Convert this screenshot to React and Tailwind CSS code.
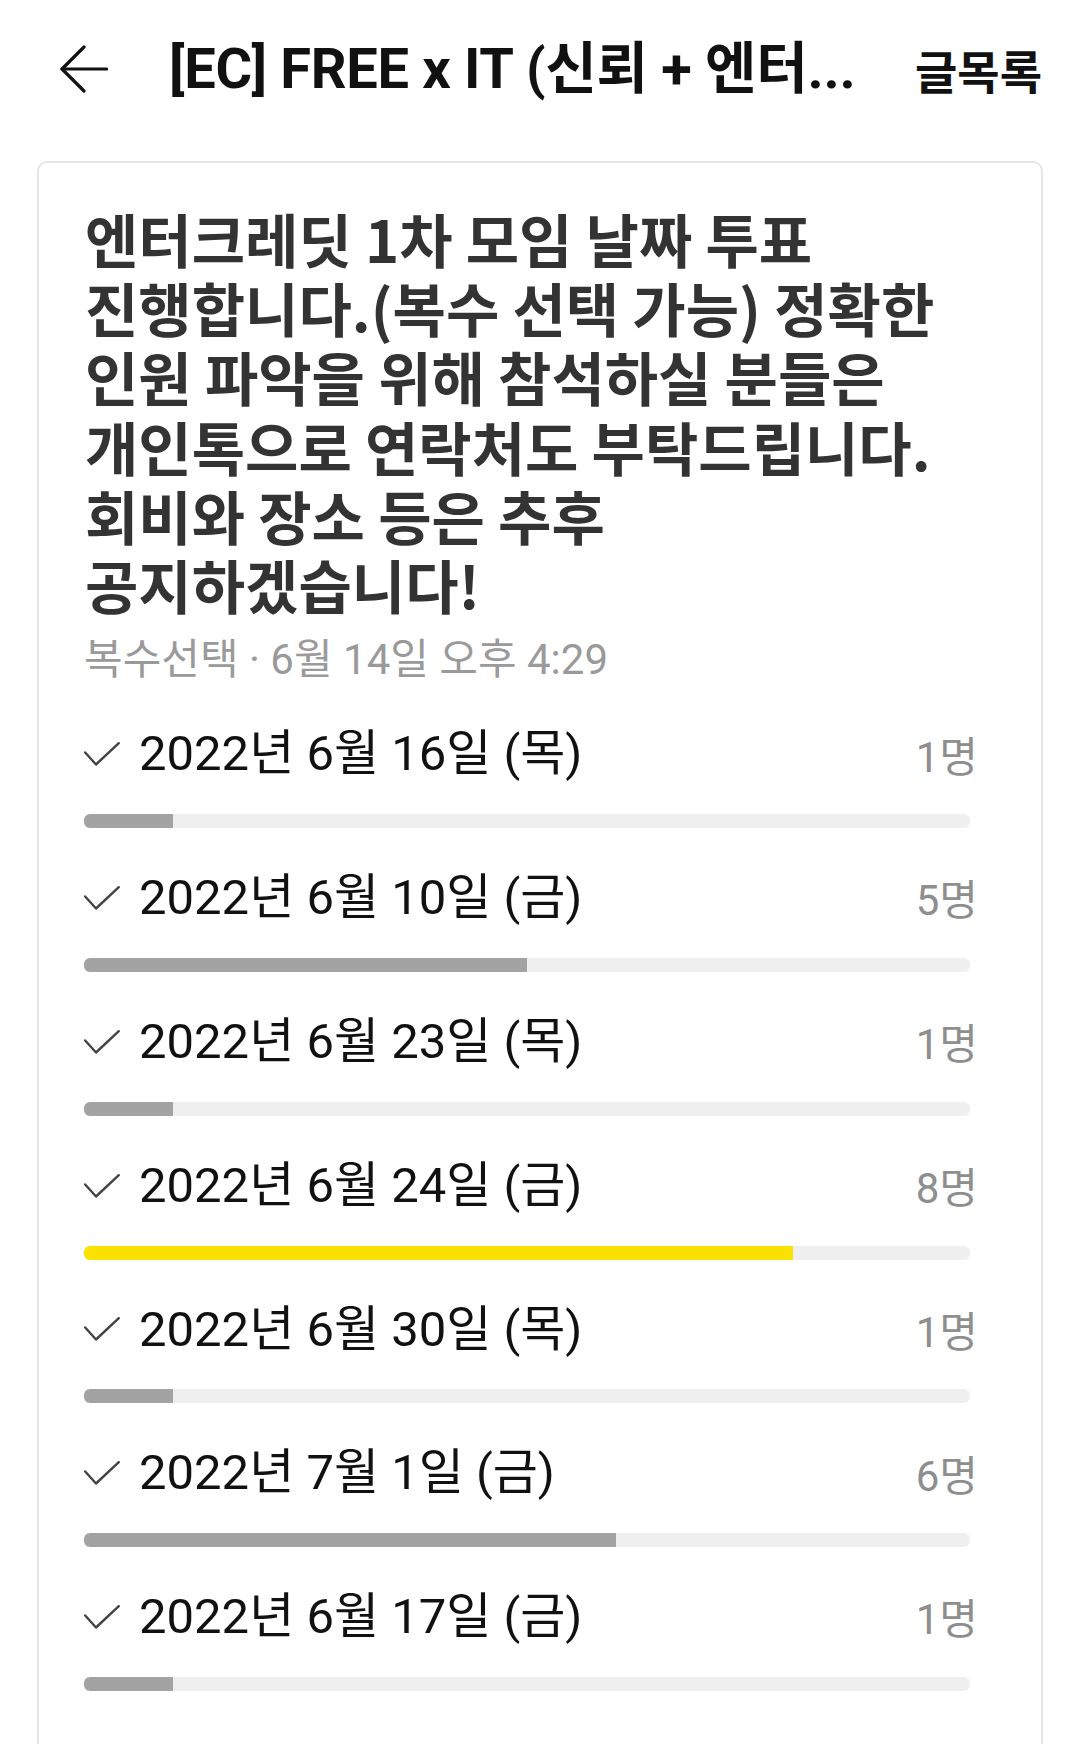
import React from "react";

const options = [
  { label: "2022년 6월 16일 (목)", count: 1 },
  { label: "2022년 6월 10일 (금)", count: 5 },
  { label: "2022년 6월 23일 (목)", count: 1 },
  { label: "2022년 6월 24일 (금)", count: 8, top: true },
  { label: "2022년 6월 30일 (목)", count: 1 },
  { label: "2022년 7월 1일 (금)", count: 6 },
  { label: "2022년 6월 17일 (금)", count: 1 },
];

const questionLines = [
  "엔터크레딧 1차 모임 날짜 투표",
  "진행합니다.(복수 선택 가능) 정확한",
  "인원 파악을 위해 참석하실 분들은",
  "개인톡으로 연락처도 부탁드립니다.",
  "회비와 장소 등은 추후",
  "공지하겠습니다!",
];

function BackArrow() {
  return (
    <svg width="48" height="48" viewBox="0 0 48 48" fill="none" stroke="#111" strokeWidth="3.2" strokeLinecap="round" strokeLinejoin="round">
      <path d="M2 24 H46.5" />
      <path d="M24 2 L2 24 L24 46" />
    </svg>
  );
}

function Check() {
  return (
    <svg width="36" height="24" viewBox="0 0 36 24" fill="none" stroke="#444" strokeWidth="2.4" strokeLinecap="round" strokeLinejoin="round">
      <polyline points="1.2,10.5 12,22.5 34.8,1.2" />
    </svg>
  );
}

export default function App() {
  return (
    <div className="w-[1080px] h-[1744px] overflow-hidden bg-white font-['Roboto','Noto_Sans_CJK_KR',sans-serif]">
      <header className="h-[138px] flex items-center pl-[60px] pr-[38px]">
        <BackArrow />
        <div className="ml-[61px] flex-1 min-w-0 whitespace-nowrap text-[56px] font-bold text-[#111] tracking-[-0.3px]">
          [EC] FREE x IT (신뢰 + 엔터...
        </div>
        <div className="text-[46px] font-bold text-[#111] font-['Noto_Sans_CJK_KR',sans-serif]">글목록</div>
      </header>

      <div className="mt-[23px] mx-[37px] h-[1700px] border-2 border-[#e6e6e6] rounded-[10px] pl-[45px] pr-[63px] pt-[41px]">
        <div className="text-[58px] font-bold text-[#333] font-['Noto_Sans_CJK_KR',sans-serif] pl-[1px] whitespace-nowrap">
          {questionLines.map((l, i) => (
            <div key={i} className="h-[69.2px] leading-[69.2px]">{l}</div>
          ))}
        </div>

        <div className="mt-[16px] h-[50px] leading-[50px] text-[42px] text-[#9a9a9a] whitespace-nowrap">
          복수선택 · 6월 14일 오후 4:29
        </div>

        <div className="mt-[39px] flex flex-col">
          {options.map((o, i) => (
            <div key={i} className="pb-[39.8px]">
              <div className="h-[60px] flex items-center">
                <Check />
                <span className="ml-[19px] flex-1 text-[49px] text-[#111] whitespace-nowrap">{o.label}</span>
                <span className="text-[42px] text-[#8e8e8e] pt-[6px]">{o.count}명</span>
              </div>
              <div className="mt-[30px] mr-[8px] h-[14px] rounded-[6px] bg-[#efefef] overflow-hidden">
                <div
                  className={o.top ? "h-full bg-[#fae100]" : "h-full bg-[#a3a3a3]"}
                  style={{ width: `${o.count * 10}%` }}
                />
              </div>
            </div>
          ))}
        </div>
      </div>
    </div>
  );
}
